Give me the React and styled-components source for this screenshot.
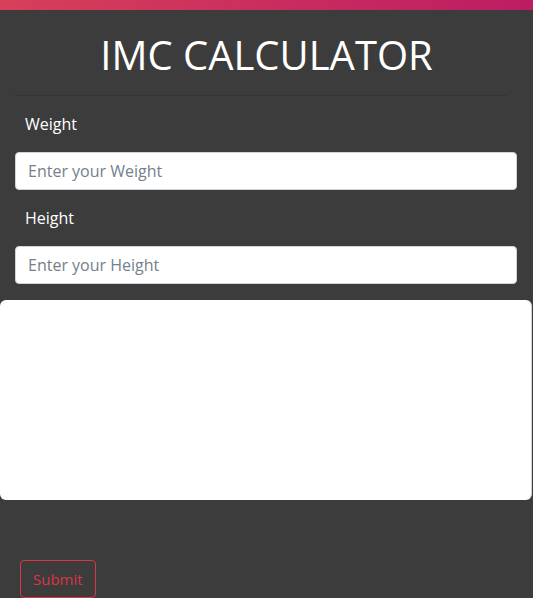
import React from "react";
import styled, { createGlobalStyle } from "styled-components";

const GlobalStyle = createGlobalStyle`
  html, body {
    margin: 0;
    padding: 0;
    background-color: #3c3c3c;
    font-family: "Open Sans", "Noto Sans", sans-serif;
  }
  * {
    box-sizing: border-box;
  }
`;

function App() {
  return (
    <Page>
      <GlobalStyle />
      <TopBar />
      <Title>IMC CALCULATOR</Title>
      <Divider />
      <Form>
        <Label htmlFor="weight">Weight</Label>
        <Input id="weight" placeholder="Enter your Weight" />
        <Label htmlFor="height">Height</Label>
        <Input id="height" placeholder="Enter your Height" />
      </Form>
      <ResultCard />
      <Footer>
        <SubmitButton>Submit</SubmitButton>
      </Footer>
    </Page>
  );
}

const Page = styled.div`
  width: 100%;
  min-height: 100vh;
  background-color: #3c3c3c;
  display: flex;
  flex-direction: column;
`;

const TopBar = styled.div`
  height: 10px;
  background: linear-gradient(90deg, #d6405a 0%, #bd1c63 100%);
`;

const Title = styled.h1`
  margin: 21px 0 0;
  font-size: 40px;
  font-weight: 400;
  line-height: 48px;
  color: #ffffff;
  text-align: center;
`;

const Divider = styled.hr`
  margin: 16px 26px 0 15px;
  border: 0;
  border-top: 1px solid #343434;
`;

const Form = styled.div`
  display: flex;
  flex-direction: column;
  gap: 16px;
  padding: 16px 16px 0 15px;
`;

const Label = styled.label`
  display: block;
  padding-left: 10px;
  font-size: 16px;
  line-height: 24px;
  color: #ffffff;
`;

const Input = styled.input`
  display: block;
  width: 100%;
  height: 38px;
  padding: 6px 12px;
  font-family: inherit;
  font-size: 16px;
  color: #495057;
  background-color: #ffffff;
  border: 1px solid #ced4da;
  border-radius: 4px;
  outline: none;

  &::placeholder {
    color: #74808c;
  }
`;

const ResultCard = styled.div`
  margin: 16px 1px 0 0;
  height: 200px;
  background-color: #ffffff;
  border-right: 1px solid #d0d0d8;
  border-radius: 6px;
`;

const Footer = styled.div`
  padding: 60px 20px 0;
`;

const SubmitButton = styled.button`
  height: 38px;
  padding: 6px 12px;
  font-family: inherit;
  font-size: 15px;
  line-height: 24px;
  color: #dc3545;
  background: transparent;
  border: 1px solid #dc3545;
  border-radius: 4px;
  cursor: pointer;
`;

export default App;
